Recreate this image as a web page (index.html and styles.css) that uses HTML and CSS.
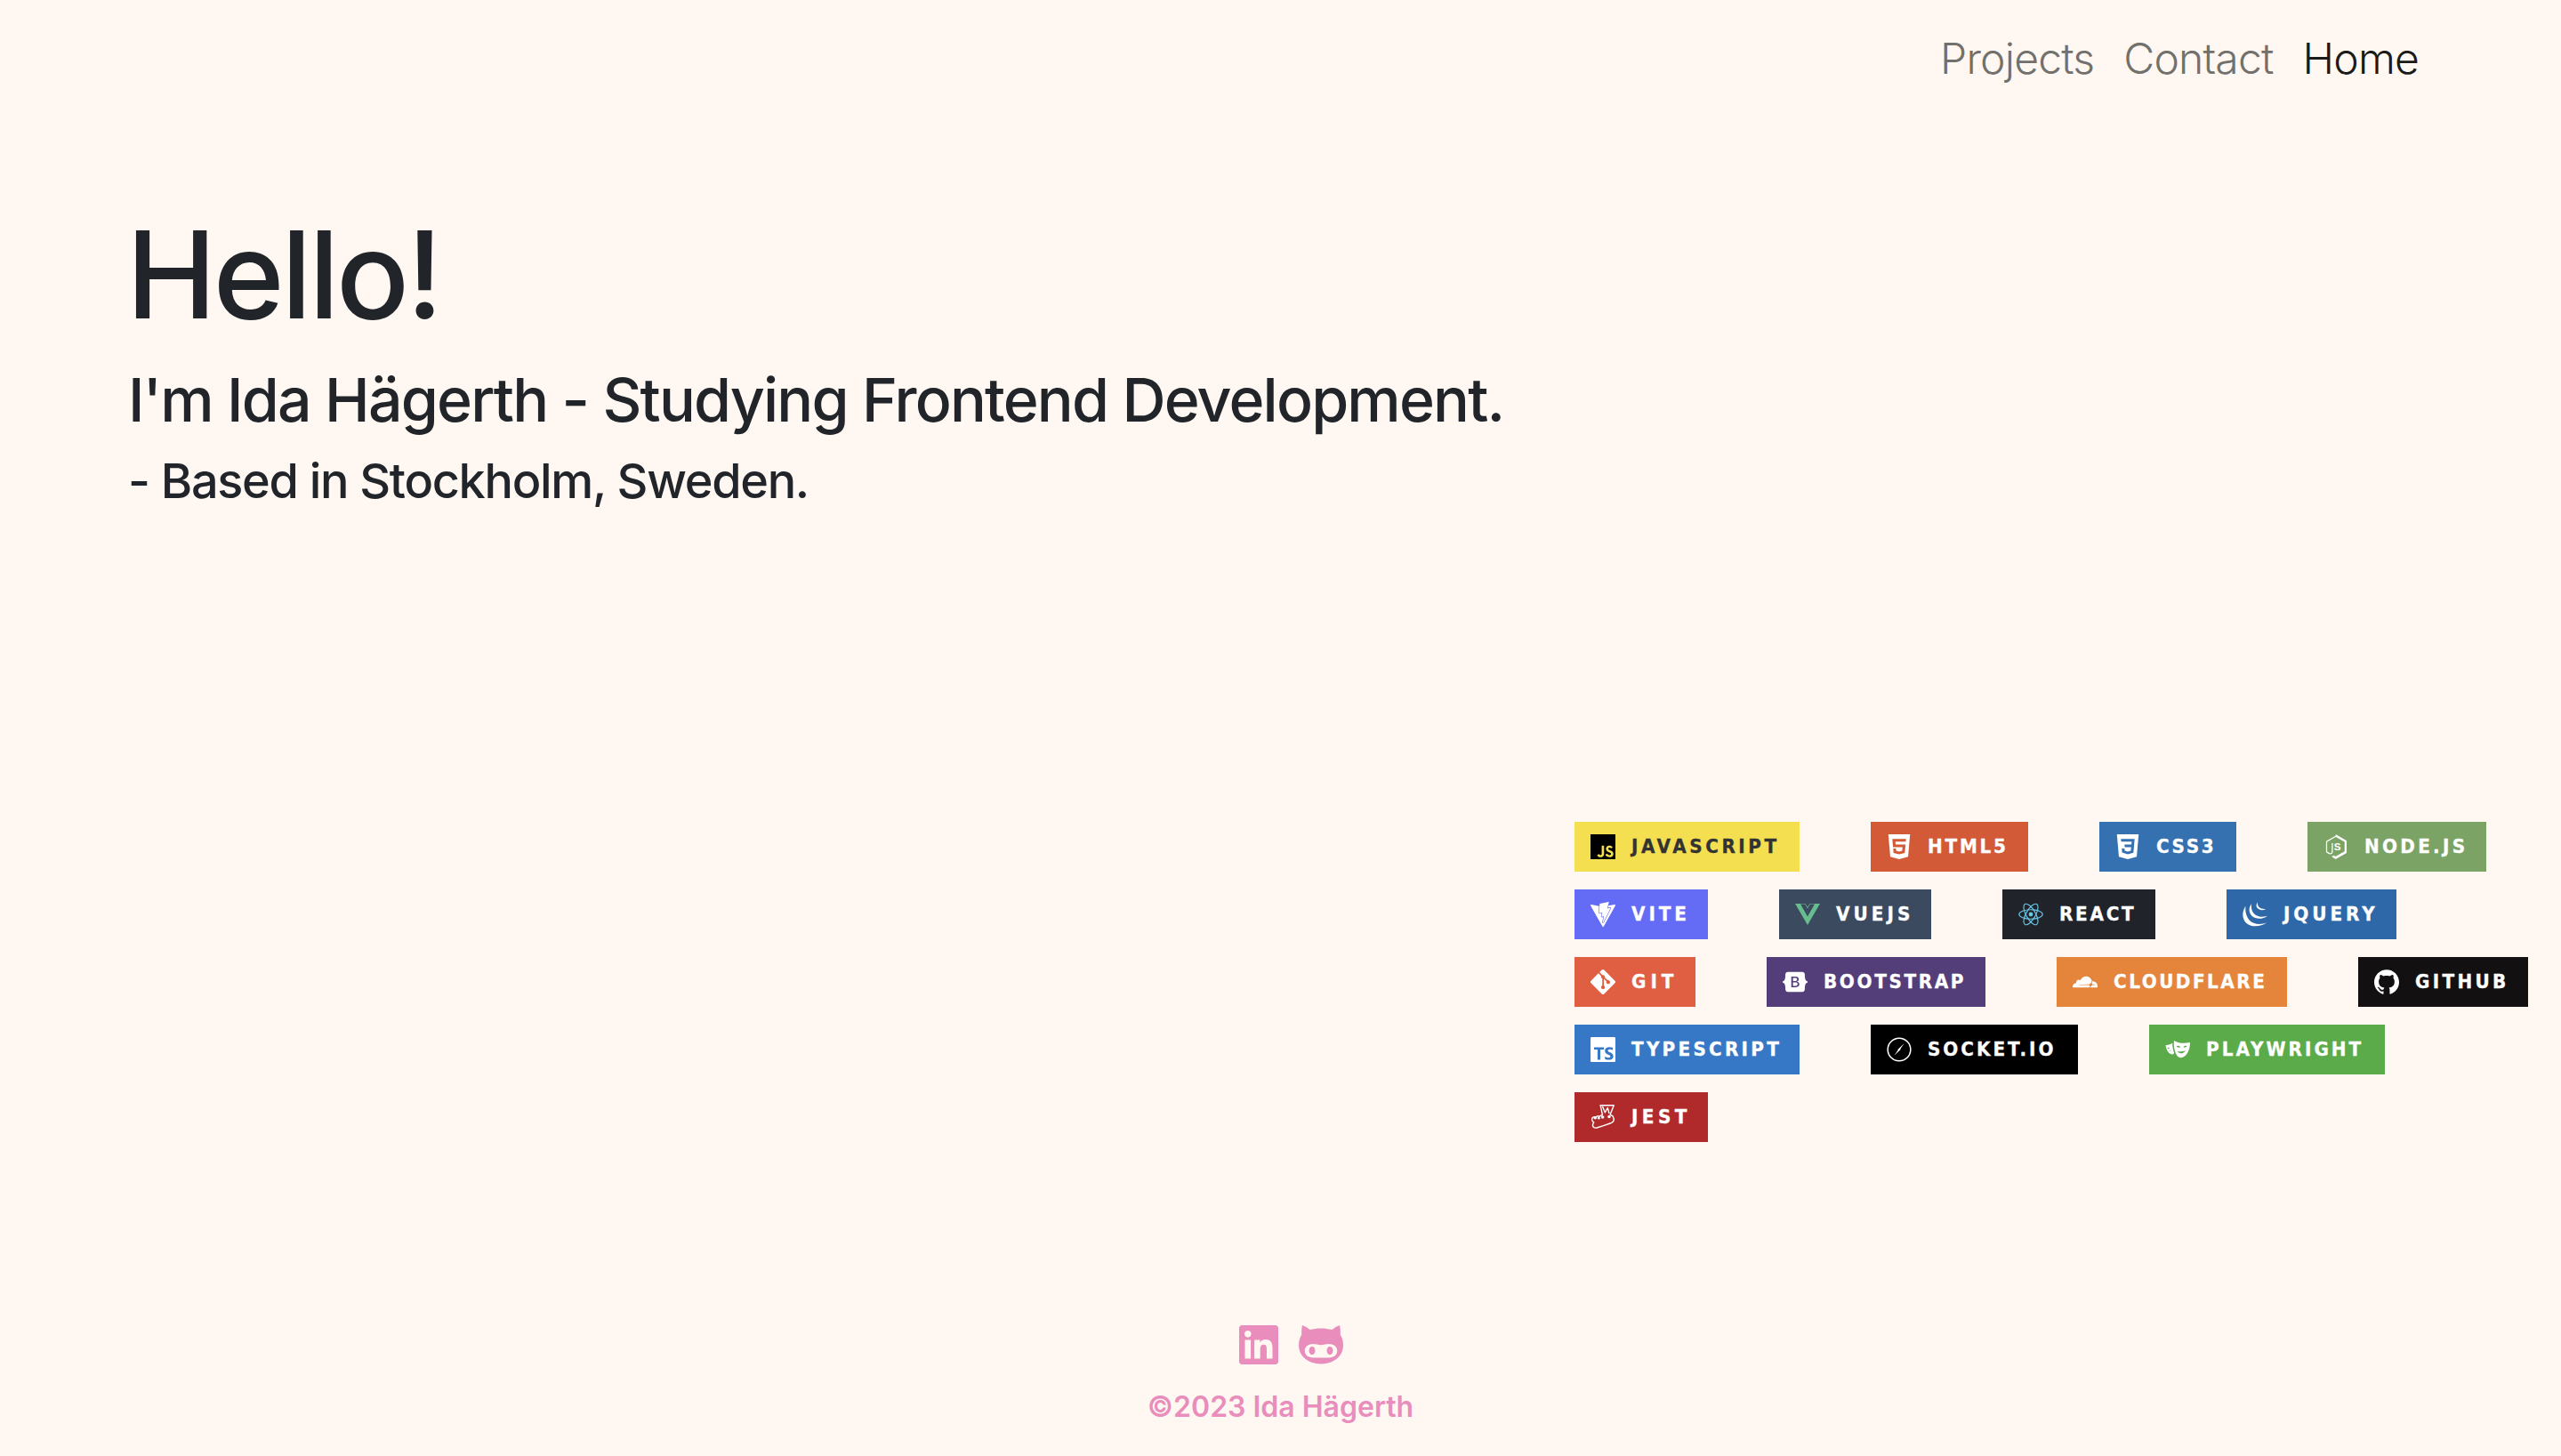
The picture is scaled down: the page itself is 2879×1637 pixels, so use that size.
FILE: index.html
```html
<!DOCTYPE html>
<html lang="en">
<head>
<meta charset="utf-8">
<title>Ida Hägerth</title>
<link rel="stylesheet" href="styles.css">
</head>
<body>
<div class="page">
  <nav class="nav">
    <a class="nav-link" href="#">Projects</a>
    <a class="nav-link" href="#">Contact</a>
    <a class="nav-link active" href="#">Home</a>
  </nav>
  <main class="main">
    <section class="intro">
      <h1 class="hello">Hello!</h1>
      <h2 class="lead">I'm Ida Hägerth - Studying Frontend Development.</h2>
      <h3 class="sub">- Based in Stockholm, Sweden.</h3>
    </section>
    <section class="badges">
      <div class="badge b-js"><svg class="ico" viewBox="0 0 24 24"><path fill="#000" d="M0 0h24v24H0V0zm22.034 18.276c-.175-1.095-.888-2.015-3.003-2.873-.736-.345-1.554-.585-1.797-1.14-.091-.33-.105-.51-.046-.705.15-.646.915-.84 1.515-.66.39.12.75.42.976.9 1.034-.676 1.034-.676 1.755-1.125-.27-.42-.404-.601-.586-.78-.63-.705-1.469-1.065-2.834-1.034l-.705.089c-.676.165-1.32.525-1.71 1.005-1.14 1.291-.811 3.541.569 4.471 1.365 1.02 3.361 1.244 3.616 2.205.24 1.17-.87 1.545-1.966 1.41-.811-.18-1.26-.586-1.755-1.336l-1.83 1.051c.21.48.45.689.81 1.109 1.74 1.756 6.09 1.666 6.871-1.004.029-.09.24-.705.074-1.65l.046.067zm-8.983-7.245h-2.248c0 1.938-.009 3.864-.009 5.805 0 1.232.063 2.363-.138 2.711-.33.689-1.18.601-1.566.48-.396-.196-.597-.466-.83-.855-.063-.105-.11-.196-.127-.196l-1.825 1.125c.305.63.75 1.172 1.324 1.517.855.51 2.004.675 3.207.405.783-.226 1.458-.691 1.811-1.411.51-.93.402-2.07.397-3.346.012-2.054 0-4.109 0-6.179l.004-.056z"/></svg><span>JAVASCRIPT</span></div>
      <div class="badge b-html"><svg class="ico" viewBox="0 0 24 24"><path fill="#fff" d="M1.5 0h21l-1.91 21.563L11.977 24l-8.564-2.438L1.5 0zm7.031 9.75l-.232-2.718 10.059.003.23-2.622L5.412 4.41l.698 8.01h9.126l-.326 3.426-2.91.804-2.955-.81-.188-2.11H6.248l.33 4.171L12 19.351l5.379-1.443.744-8.157H8.531z"/></svg><span>HTML5</span></div>
      <div class="badge b-css"><svg class="ico" viewBox="0 0 24 24"><path fill="#fff" d="M1.5 0h21l-1.91 21.563L11.977 24l-8.565-2.438L1.5 0zm17.09 4.413L5.41 4.41l.213 2.622 10.125.002-.255 2.716h-6.64l.24 2.573h6.182l-.366 3.523-2.91.804-2.956-.81-.188-2.11h-2.61l.29 3.855L12 19.288l5.373-1.53L18.59 4.414z"/></svg><span>CSS3</span></div>
      <div class="badge b-node"><svg class="ico" viewBox="0 0 24 24"><path fill="none" stroke="#fff" stroke-width="1.1" stroke-linejoin="round" d="M11.8.7l9.9 5.700v11.300l-7.700 4.400-2.200 1.200-3-1.800 1-.5 2 1 9.100-5.200V7L11.800 1.900 3 7v10l2.700 1.500c1.600.6 2.800-.2 2.800-1.800V8.500"/><text class="node-js" x="10" y="15.700">S</text></svg><span>NODE.JS</span></div>

      <div class="badge b-vite"><svg class="ico" viewBox="0 0 24 24"><path fill="#fff" d="m8.286 10.578.512-8.657a.306.306 0 0 1 .247-.282L17.377.006a.306.306 0 0 1 .353.385l-1.558 5.403a.306.306 0 0 0 .352.385l2.388-.46a.306.306 0 0 1 .332.438l-6.79 13.55-.123.19a.294.294 0 0 1-.252.14c-.177 0-.35-.152-.305-.369l1.095-5.301a.306.306 0 0 0-.388-.355l-1.433.435a.306.306 0 0 1-.389-.354l.69-3.375a.306.306 0 0 0-.37-.36l-2.32.536a.306.306 0 0 1-.374-.316zm14.976-7.926L17.284 3.74l-.544 1.887 2.077-.4a.8.8 0 0 1 .84.369.8.8 0 0 1 .034.783L12.9 19.93l-.013.025-.015.023-.122.19a.801.801 0 0 1-.672.37.826.826 0 0 1-.634-.302.8.8 0 0 1-.16-.67l1.029-4.981-1.12.34a.81.81 0 0 1-.86-.262.802.802 0 0 1-.165-.67l.63-3.08-2.027.468a.808.808 0 0 1-.768-.233.81.81 0 0 1-.217-.6l.389-6.57-7.44-1.33a.612.612 0 0 0-.64.906L11.58 23.691a.612.612 0 0 0 1.066-.004l11.26-20.135a.612.612 0 0 0-.644-.9z"/></svg><span>VITE</span></div>
      <div class="badge b-vue"><svg class="ico" viewBox="0 0 24 24"><path fill="#68bd8f" d="M24,1.61H14.06L12,5.16,9.94,1.61H0L12,22.39ZM12,14.08,5.16,2.23H9.59L12,6.41l2.41-4.18h4.43Z"/></svg><span>VUEJS</span></div>
      <div class="badge b-react"><svg class="ico" viewBox="0 0 24 24"><g fill="none" stroke="#6ac6e6" stroke-width="1"><ellipse cx="12" cy="12" rx="11.3" ry="4.5"/><ellipse cx="12" cy="12" rx="11.3" ry="4.5" transform="rotate(60 12 12)"/><ellipse cx="12" cy="12" rx="11.3" ry="4.5" transform="rotate(120 12 12)"/></g><circle cx="12" cy="12" r="2.1" fill="#6ac6e6"/></svg><span>REACT</span></div>
      <div class="badge b-jquery"><svg class="ico" viewBox="0 0 24 24"><path fill="#fff" d="M3 4C-.8 9.500-.6 16.500 3.500 20.300 8 24.500 17 24.500 23.300 20 17 22.500 10 21.500 6.500 17.500 3.500 14 2.300 9 3 4z"/><path fill="#fff" d="M8.600 2C5.500 6 6 11 9.200 13.800 13 17 19.500 17 23.800 13.400 19 15 14.500 14.500 11.500 11.800 9 9.500 8 5.500 8.600 2z"/><path fill="#fff" d="M14.600.2C12.800 2.500 13 5 14.800 6.500 17 8.300 20 8.200 22.500 6.800 19.500 7.200 17.300 6.500 15.800 5 14.700 3.800 14.300 2 14.600.2z"/></svg><span>JQUERY</span></div>

      <div class="badge b-git"><svg class="ico" viewBox="0 0 24 24"><path fill="#fff" d="M23.546 10.93L13.067.452c-.604-.603-1.582-.603-2.188 0L8.708 2.627l2.76 2.76c.645-.215 1.379-.07 1.889.441.516.515.658 1.258.438 1.9l2.658 2.66c.645-.223 1.387-.078 1.9.435.721.72.721 1.884 0 2.604-.719.719-1.881.719-2.6 0-.539-.541-.674-1.337-.404-1.996L12.86 8.955v6.525c.176.086.342.203.488.348.713.721.713 1.883 0 2.6-.719.721-1.889.721-2.609 0-.719-.719-.719-1.879 0-2.598.182-.18.387-.316.605-.406V8.835c-.217-.091-.424-.222-.6-.401-.545-.545-.676-1.342-.396-2.009L7.636 3.7.45 10.881c-.6.605-.6 1.584 0 2.189l10.48 10.477c.604.604 1.582.604 2.186 0l10.43-10.43c.605-.603.605-1.582 0-2.187"/></svg><span>GIT</span></div>
      <div class="badge b-boot"><svg class="ico" viewBox="0 0 24 24"><path fill="#fff" d="M11.77 11.24H9.956V8.202h2.152c1.17 0 1.834.522 1.834 1.466 0 1.008-.773 1.572-2.174 1.572zm.324 1.206H9.957v3.348h2.231c1.459 0 2.232-.585 2.232-1.685s-.795-1.663-2.326-1.663zM24 11.39v1.218c-1.128.108-1.817.944-2.226 2.268-.407 1.319-.463 2.937-.42 4.186.045 1.3-.968 2.5-2.337 2.5H4.985c-1.37 0-2.383-1.2-2.337-2.5.043-1.249-.013-2.867-.42-4.186-.41-1.324-1.1-2.16-2.228-2.268V11.39c1.128-.108 1.819-.944 2.227-2.268.408-1.319.464-2.937.42-4.186-.045-1.3.968-2.5 2.338-2.5h14.032c1.37 0 2.382 1.2 2.337 2.5-.043 1.249.013 2.867.42 4.186.409 1.324 1.098 2.16 2.226 2.268zm-7.927 2.817c0-1.354-.953-2.333-2.368-2.488v-.057c1.04-.169 1.856-1.135 1.856-2.213 0-1.537-1.213-2.538-3.062-2.538h-4.16v10.172h4.181c2.218 0 3.553-1.086 3.553-2.876z"/></svg><span>BOOTSTRAP</span></div>
      <div class="badge b-cloud"><svg class="ico" viewBox="0 0 24 24"><path fill="#fff" d="M16.5088 16.8447c.1475-.5068.0908-.9707-.1553-1.3154-.2246-.3164-.6045-.499-1.0615-.5205l-8.6592-.1123a.1559.1559 0 0 1-.1333-.0713c-.0283-.042-.0351-.0986-.021-.1553.0278-.084.1123-.1484.2036-.1562l8.7359-.1123c1.0351-.0489 2.1601-.8868 2.5537-1.9136l.499-1.3013c.0215-.0561.0293-.1128.0147-.168-.5625-2.5463-2.835-4.4453-5.5499-4.4453-2.5039 0-4.6284 1.6177-5.3876 3.8614-.4927-.3658-1.1187-.5625-1.794-.499-1.2026.119-2.1665 1.083-2.2861 2.2856-.0283.31-.0069.6128.0635.894C1.5683 13.171 0 14.7754 0 16.752c0 .1748.0142.3515.0352.5273.0141.083.0844.1475.1689.1475h15.9814c.0909 0 .1758-.0645.2032-.1553l.12-.4268zm2.7568-5.5634c-.0771 0-.1611 0-.2383.0112-.0566 0-.1054.0415-.127.0976l-.3378 1.1744c-.1475.5068-.0918.9707.1543 1.3164.2256.3164.6055.498 1.0625.5195l1.8437.1133c.0557 0 .1055.0263.1329.0703.0283.043.0351.1074.0214.1562-.0283.084-.1132.1485-.204.1553l-1.921.1123c-1.041.0488-2.1582.8867-2.5527 1.914l-.1406.3585c-.0283.0713.0215.1416.0986.1416h6.5977c.0771 0 .1474-.0489.169-.126.1122-.4082.1757-.837.1757-1.2803 0-2.6025-2.125-4.727-4.7344-4.727"/></svg><span>CLOUDFLARE</span></div>
      <div class="badge b-github"><svg class="ico" viewBox="0 0 24 24"><path fill="#fff" d="M12 .297c-6.63 0-12 5.373-12 12 0 5.303 3.438 9.8 8.205 11.385.6.113.82-.258.82-.577 0-.285-.01-1.04-.015-2.04-3.338.724-4.042-1.61-4.042-1.61C4.422 18.07 3.633 17.7 3.633 17.7c-1.087-.744.084-.729.084-.729 1.205.084 1.838 1.236 1.838 1.236 1.07 1.835 2.809 1.305 3.495.998.108-.776.417-1.305.76-1.605-2.665-.3-5.466-1.332-5.466-5.93 0-1.31.465-2.38 1.235-3.22-.135-.303-.54-1.523.105-3.176 0 0 1.005-.322 3.3 1.23.96-.267 1.98-.399 3-.405 1.02.006 2.04.138 3 .405 2.28-1.552 3.285-1.23 3.285-1.23.645 1.653.24 2.873.12 3.176.765.84 1.23 1.91 1.23 3.22 0 4.61-2.805 5.625-5.475 5.92.42.36.81 1.096.81 2.22 0 1.606-.015 2.896-.015 3.286 0 .315.21.69.825.57C20.565 22.092 24 17.592 24 12.297c0-6.627-5.373-12-12-12"/></svg><span>GITHUB</span></div>

      <div class="badge b-ts"><svg class="ico" viewBox="0 0 24 24"><path fill="#fff" d="M1.125 0C.502 0 0 .502 0 1.125v21.75C0 23.498.502 24 1.125 24h21.75c.623 0 1.125-.502 1.125-1.125V1.125C24 .502 23.498 0 22.875 0zm17.363 9.75c.612 0 1.154.037 1.627.111a6.38 6.38 0 0 1 1.306.34v2.458a3.95 3.95 0 0 0-.643-.361 5.093 5.093 0 0 0-.717-.26 5.453 5.453 0 0 0-1.426-.2c-.3 0-.573.028-.819.086a2.1 2.1 0 0 0-.623.242c-.17.104-.3.229-.393.374a.888.888 0 0 0-.14.49c0 .196.053.373.156.529.104.156.252.304.443.444s.423.276.696.41c.273.135.582.274.926.416.47.197.892.407 1.266.628.374.222.695.473.963.753.268.279.472.598.614.957.142.359.214.776.214 1.253 0 .657-.125 1.21-.373 1.656a3.033 3.033 0 0 1-1.012 1.085 4.38 4.38 0 0 1-1.487.596c-.566.12-1.163.18-1.79.18a9.916 9.916 0 0 1-1.84-.164 5.544 5.544 0 0 1-1.512-.493v-2.63a5.033 5.033 0 0 0 3.237 1.2c.333 0 .624-.03.872-.09.249-.06.456-.144.623-.25.166-.108.29-.234.373-.38a1.023 1.023 0 0 0-.074-1.089 2.12 2.12 0 0 0-.537-.5 5.597 5.597 0 0 0-.807-.444 27.72 27.72 0 0 0-1.007-.436c-.918-.383-1.602-.852-2.053-1.405-.45-.553-.676-1.222-.676-2.005 0-.614.123-1.141.369-1.582.246-.441.58-.804 1.004-1.089a4.494 4.494 0 0 1 1.47-.629 7.536 7.536 0 0 1 1.77-.201zm-15.113.188h9.563v2.166H9.506v9.646H6.789v-9.646H3.375z"/></svg><span>TYPESCRIPT</span></div>
      <div class="badge b-socket"><svg class="ico" viewBox="0 0 24 24"><circle cx="12" cy="12" r="11" fill="none" stroke="#fff" stroke-width="1.3"/><path fill="#fff" d="M16.800 6.300l-6.400 6h2.200zM7.200 17.700l6.400-6h-2.200z"/></svg><span>SOCKET.IO</span></div>
      <div class="badge b-play"><svg class="ico" viewBox="0 0 24 24"><path fill="#fff" fill-rule="evenodd" d="M.5 7.800C2.500 7.800 5 6.800 7 5.700 7 9 7.500 12 8.500 14.800 8.800 15.800 8 17 6.500 16.700 5 16.500 3.500 15 3.500 15 1.500 13 .7 10.500.5 7.800zm1.600 2.500c.5.900 1.300 1.200 2.200.8-.3-1-1.300-1.400-2.200-.8zM4 14c.5-.7 1.200-1 2.200-.8-.6-.9-1.900-.9-2.200.8z"/><path fill="#fff" fill-rule="evenodd" d="M8.500 3.400C13 6 18 6.500 24 5.200 24 11 22 16 19 18.300 16.500 20.500 13.500 20.500 12 18.500 9.500 15.500 8 10 8.500 3.400zm2.300 5.400c.9 1.200 2.400 1.500 3.900 1-.6-1.400-2.700-1.900-3.900-1zm6.800 1.100c1.300.4 2.700-.1 3.500-1.300-1.300-.7-3.100-.2-3.500 1.300zm-6 3.800c2.400 2.700 5.500 2.700 8.300-.7-2.500.9-5.500 1.200-8.300.7z"/></svg><span>PLAYWRIGHT</span></div>

      <div class="badge b-jest"><svg class="ico" viewBox="0 0 24 24"><g fill="none" stroke="#fff" stroke-width="1.200" stroke-linejoin="round"><path d="M9.500.6H22.500L19 9.500l2.500 1.500 1 3c0 2-1 3.200-3 3.800l-7 2.500-6.500 2c-2 .3-3.500-.5-3.800-1.800-.2-1.200.2-2.500 1-3.500-1.700-.9-2.400-3.200-1.200-4.500 1-.9 2.500-.9 3.300-.3.800-1.200 2.300-1.500 3.500-.8L11.500 9.500z"/><path d="M11.500 1.500l2.500 6 2.500-4.500 1.500 5.500"/></g><circle cx="4.500" cy="12.600" r="1.500" fill="#fff"/><circle cx="11.700" cy="12" r="1.500" fill="#fff"/><circle cx="18" cy="11.500" r="1.500" fill="#fff"/><circle cx="8" cy="13" r="1.200" fill="#fff"/></svg><span>JEST</span></div>
    </section>
  </main>
  <footer class="footer">
    <div class="socials">
      <svg class="soc-in" viewBox="0 0 24 24"><path d="M20.447 20.452h-3.554v-5.569c0-1.328-.027-3.037-1.852-3.037-1.853 0-2.136 1.445-2.136 2.939v5.667H9.351V9h3.414v1.561h.046c.477-.9 1.637-1.85 3.37-1.85 3.601 0 4.267 2.37 4.267 5.455v6.286zM5.337 7.433c-1.144 0-2.063-.926-2.063-2.065 0-1.138.92-2.063 2.063-2.063 1.14 0 2.064.925 2.064 2.063 0 1.139-.925 2.065-2.064 2.065zm1.782 13.019H3.555V9h3.564v11.452zM22.225 0H1.771C.792 0 0 .774 0 1.729v20.542C0 23.227.792 24 1.771 24h20.451C23.2 24 24 23.227 24 22.271V1.729C24 .774 23.2 0 22.222 0h.003z"/></svg>
      <svg class="soc-gh" viewBox="0 0 50 44"><path fill-rule="evenodd" d="M4 0c3 1 6 2.700 8.500 5 3.700-1.100 8-1.600 12.500-1.600s8.800.5 12.500 1.600C40 2.700 43 1 46 0c.8 3.200 1 6.800.7 10.500C48.900 14 50 18 50 22.500 50 35 39 43.500 25 43.500S0 35 0 22.500c0-4.500 1.100-8.500 3.300-12C3 6.800 3.200 3.200 4 0zM16.500 21c-5.800 0-9.700 3-9.700 7.500 0 5 3.700 8 9.700 8h17c6 0 9.700-3 9.700-8 0-4.500-3.900-7.500-9.700-7.500-2.800 0-5.500 1.200-8.500 1.200S19.300 21 16.500 21zm-1.500 3c2 0 3.500 2.100 3.500 4.600s-1.500 4.600-3.500 4.600-3.500-2.100-3.500-4.600 1.500-4.600 3.500-4.600zm20 0c2 0 3.500 2.100 3.500 4.600s-1.500 4.600-3.500 4.600-3.500-2.100-3.500-4.600 1.500-4.600 3.500-4.600z"/></svg>
    </div>
    <p class="copy">©2023 Ida Hägerth</p>
  </footer>
</div>
</body>
</html>
```

FILE: styles.css
```css
* { box-sizing: border-box; }
html, body { margin: 0; padding: 0; }
body {
  background: #fff8f2;
  color: #212529;
  font-family: "Inter", "Liberation Sans", sans-serif;
}
.page {
  min-height: 100vh;
  display: flex;
  flex-direction: column;
}
.nav {
  display: flex;
  justify-content: flex-end;
  gap: 33px;
  padding: 30px 160px 28px 0;
}
.nav-link {
  font-size: 48px;
  line-height: 72px;
  font-weight: 350;
  letter-spacing: -0.8px;
  color: #72706c;
  text-decoration: none;
}
.nav-link.active { color: #1a1a19; }
.main { display: flex; flex-direction: column; }
.intro { padding: 97px 0 0 144px; }
.hello, .lead, .sub { margin: 0; font-weight: 450; }
.hello { font-size: 136px; line-height: 164px; letter-spacing: -3.4px; margin: 0 0 17px -2px; }
.lead { font-size: 68px; line-height: 82px; letter-spacing: -1.82px; margin-bottom: 19px; }
.sub { font-size: 54px; line-height: 64px; letter-spacing: -1.3px; }

.badges {
  width: 1109px;
  margin: 351px 0 0 auto;
  display: flex;
  flex-wrap: wrap;
  gap: 20px 80px;
}
.badge {
  height: 56px;
  display: flex;
  align-items: center;
  gap: 18px;
  padding-left: 18px;
  color: #fff;
  font-family: "DejaVu Sans", sans-serif;
  font-weight: 700;
  font-size: 20px;
  white-space: nowrap;
}
.badge span { transform: scaleY(1.06); -webkit-text-stroke: 0.3px currentColor; }
.ico { width: 28px; height: 28px; flex: none; }
.node-js { font-family: "Liberation Sans", sans-serif; font-size: 10px; fill: #fff; }

.b-js { width: 253px; background: #f3df4f; color: #333; letter-spacing: 3.53px; }
.b-html { width: 177px; background: #d25a37; letter-spacing: 2.77px; }
.b-css { width: 154px; background: #3570b0; letter-spacing: 2.57px; }
.b-node { width: 201px; background: #7aa365; letter-spacing: 3.27px; }
.b-vite { width: 150px; background: #646cf6; letter-spacing: 3.9px; }
.b-vue { width: 171px; background: #3b4a5f; letter-spacing: 4.05px; }
.b-react { width: 172px; background: #20232a; letter-spacing: 2.7px; }
.b-jquery { width: 191px; background: #2f68a8; letter-spacing: 3.9px; }
.b-git { width: 136px; background: #e05e42; letter-spacing: 5px; }
.b-boot { width: 246px; background: #543e7a; letter-spacing: 2.63px; }
.b-cloud { width: 259px; background: #e5853c; letter-spacing: 2.48px; }
.b-github { width: 191px; background: #121011; letter-spacing: 3.32px; }
.b-ts { width: 253px; background: #3778c6; letter-spacing: 3.24px; }
.b-socket { width: 233px; background: #000; letter-spacing: 2.95px; }
.b-play { width: 265px; background: #5bab4a; letter-spacing: 3.01px; }
.b-jest { width: 150px; background: #b02a2c; letter-spacing: 4.4px; }

.footer {
  margin-top: auto;
  padding-bottom: 37px;
  display: flex;
  flex-direction: column;
  align-items: center;
  gap: 30px;
  color: #e98dbd;
}
.socials {
  display: flex;
  align-items: center;
  gap: 23px;
  margin-left: 23px;
}
.soc-in { width: 44px; height: 44px; fill: currentColor; }
.soc-gh { width: 50px; height: 44px; fill: currentColor; }
.copy { margin: 0; font-size: 32px; line-height: 36px; font-weight: 600; }
```
